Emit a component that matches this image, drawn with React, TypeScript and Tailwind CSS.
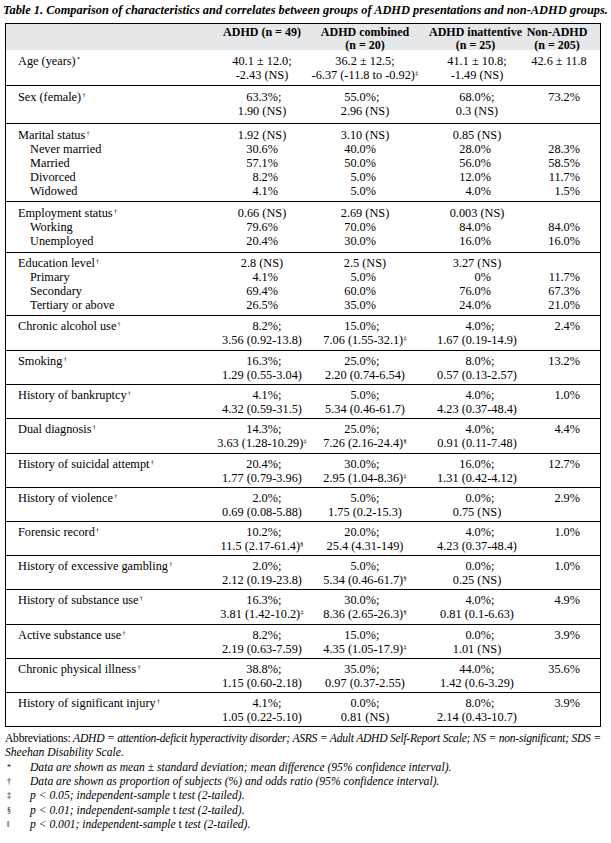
import React from "react";

type Kind = "c" | "p" | "a";
type Cell = [string, Kind] | null;

const SUPS = ["‡", "§", "*", "†", "‖"];

function Txt({ v }: { v: string }) {
  let main = v;
  let sup = "";
  const last = v.slice(-1);
  if (SUPS.includes(last)) {
    main = v.slice(0, -1);
    sup = last;
  }
  let semi = false;
  if (/%;$/.test(main)) {
    main = main.slice(0, -1);
    semi = true;
  }
  return (
    <span className="whitespace-nowrap">
      {main}
      {semi && <span className="inline-block w-0">;</span>}
      {sup && <span className="relative -top-[4px] text-[7px] leading-none">{sup}</span>}
    </span>
  );
}

const PR = ["pr-[32px]", "pr-[44px]", "pr-[43px]", "pr-[20px]"];

function ValueCell({ cell, col }: { cell: Cell; col: number }) {
  if (!cell) return <div />;
  const [v, k] = cell;
  if (k === "p") {
    return (
      <div className={`flex justify-end ${PR[col]}`}>
        <Txt v={v} />
      </div>
    );
  }
  if (k === "a") {
    return (
      <div className="flex justify-center pr-[16px]">
        <Txt v={v} />
      </div>
    );
  }
  return (
    <div className="flex justify-center">
      <Txt v={v} />
    </div>
  );
}

type Line = { label?: string; sup?: string; sub?: boolean; cells: Cell[] };

function LineRow({ line }: { line: Line }) {
  return (
    <div className="grid grid-cols-[208px_96px_110px_114px_66px] leading-[14px]">
      <div className={`${line.sub ? "pl-[24px]" : "pl-[12px]"} whitespace-nowrap`}>
        {line.label}
        {line.sup && <span className="relative -top-[4px] text-[7px] leading-none ml-[1px]">{line.sup}</span>}
      </div>
      {line.cells.map((c, i) => (
        <ValueCell key={i} cell={c} col={i} />
      ))}
    </div>
  );
}

function twoLine(label: string, a: string[], b: string[], c: string[], d: string): Line[] {
  return [
    { label, sup: "†", cells: [[a[0], "p"], [b[0], "p"], [c[0], "p"], [d, "p"]] },
    { cells: [[a[1], "c"], [b[1], "c"], [c[1], "c"], null] },
  ];
}

function catRows(label: string, stats: string[], subs: [string, string, string, string, string][]): Line[] {
  return [
    { label, sup: "†", cells: [[stats[0], "c"], [stats[1], "c"], [stats[2], "c"], null] },
    ...subs.map((s) => ({
      label: s[0],
      sub: true,
      cells: [[s[1], "p"], [s[2], "p"], [s[3], "p"], [s[4], "p"]] as Cell[],
    })),
  ];
}

const rows: { pad: string; lines: Line[] }[] = [
  {
    pad: "pt-[4px] pb-[3px]",
    lines: [
      { label: "Age (years)", sup: "*", cells: [["40.1 ± 12.0;", "c"], ["36.2 ± 12.5;", "c"], ["41.1 ± 10.8;", "c"], ["42.6 ± 11.8", "a"]] },
      { cells: [["-2.43 (NS)", "c"], ["-6.37 (-11.8 to -0.92)‡", "c"], ["-1.49 (NS)", "c"], null] },
    ],
  },
  { pad: "pt-[4px] pb-[5px]", lines: twoLine("Sex (female)", ["63.3%;", "1.90 (NS)"], ["55.0%;", "2.96 (NS)"], ["68.0%;", "0.3 (NS)"], "73.2%") },
  {
    pad: "pt-[4px] pb-[3px]",
    lines: catRows("Marital status", ["1.92 (NS)", "3.10 (NS)", "0.85 (NS)"], [
      ["Never married", "30.6%", "40.0%", "28.0%", "28.3%"],
      ["Married", "57.1%", "50.0%", "56.0%", "58.5%"],
      ["Divorced", "8.2%", "5.0%", "12.0%", "11.7%"],
      ["Widowed", "4.1%", "5.0%", "4.0%", "1.5%"],
    ]),
  },
  {
    pad: "pt-[4px] pb-[4px]",
    lines: catRows("Employment status", ["0.66 (NS)", "2.69 (NS)", "0.003 (NS)"], [
      ["Working", "79.6%", "70.0%", "84.0%", "84.0%"],
      ["Unemployed", "20.4%", "30.0%", "16.0%", "16.0%"],
    ]),
  },
  {
    pad: "pt-[3px] pb-[3px]",
    lines: catRows("Education level", ["2.8 (NS)", "2.5 (NS)", "3.27 (NS)"], [
      ["Primary", "4.1%", "5.0%", "0%", "11.7%"],
      ["Secondary", "69.4%", "60.0%", "76.0%", "67.3%"],
      ["Tertiary or above", "26.5%", "35.0%", "24.0%", "21.0%"],
    ]),
  },
  { pad: "pt-[3px] pb-[3px]", lines: twoLine("Chronic alcohol use", ["8.2%;", "3.56 (0.92-13.8)"], ["15.0%;", "7.06 (1.55-32.1)‡"], ["4.0%;", "1.67 (0.19-14.9)"], "2.4%") },
  { pad: "", lines: twoLine("Smoking", ["16.3%;", "1.29 (0.55-3.04)"], ["25.0%;", "2.20 (0.74-6.54)"], ["8.0%;", "0.57 (0.13-2.57)"], "13.2%") },
  { pad: "", lines: twoLine("History of bankruptcy", ["4.1%;", "4.32 (0.59-31.5)"], ["5.0%;", "5.34 (0.46-61.7)"], ["4.0%;", "4.23 (0.37-48.4)"], "1.0%") },
  { pad: "", lines: twoLine("Dual diagnosis", ["14.3%;", "3.63 (1.28-10.29)‡"], ["25.0%;", "7.26 (2.16-24.4)§"], ["4.0%;", "0.91 (0.11-7.48)"], "4.4%") },
  { pad: "", lines: twoLine("History of suicidal attempt", ["20.4%;", "1.77 (0.79-3.96)"], ["30.0%;", "2.95 (1.04-8.36)‡"], ["16.0%;", "1.31 (0.42-4.12)"], "12.7%") },
  { pad: "", lines: twoLine("History of violence", ["2.0%;", "0.69 (0.08-5.88)"], ["5.0%;", "1.75 (0.2-15.3)"], ["0.0%;", "0.75 (NS)"], "2.9%") },
  { pad: "", lines: twoLine("Forensic record", ["10.2%;", "11.5 (2.17-61.4)§"], ["20.0%;", "25.4 (4.31-149)"], ["4.0%;", "4.23 (0.37-48.4)"], "1.0%") },
  { pad: "", lines: twoLine("History of excessive gambling", ["2.0%;", "2.12 (0.19-23.8)"], ["5.0%;", "5.34 (0.46-61.7)§"], ["0.0%;", "0.25 (NS)"], "1.0%") },
  { pad: "", lines: twoLine("History of substance use", ["16.3%;", "3.81 (1.42-10.2)‡"], ["30.0%;", "8.36 (2.65-26.3)§"], ["4.0%;", "0.81 (0.1-6.63)"], "4.9%") },
  { pad: "", lines: twoLine("Active substance use", ["8.2%;", "2.19 (0.63-7.59)"], ["15.0%;", "4.35 (1.05-17.9)‡"], ["0.0%;", "1.01 (NS)"], "3.9%") },
  { pad: "", lines: twoLine("Chronic physical illness", ["38.8%;", "1.15 (0.60-2.18)"], ["35.0%;", "0.97 (0.37-2.55)"], ["44.0%;", "1.42 (0.6-3.29)"], "35.6%") },
  { pad: "", lines: twoLine("History of significant injury", ["4.1%;", "1.05 (0.22-5.10)"], ["0.0%;", "0.81 (NS)"], ["8.0%;", "2.14 (0.43-10.7)"], "3.9%") },
];

const notes: [string, React.ReactNode][] = [
  ["*", <>Data are shown as mean ± standard deviation; mean difference (95% confidence interval).</>],
  ["†", <>Data are shown as proportion of subjects (%) and odds ratio (95% confidence interval).</>],
  ["‡", <>p &lt; 0.05; independent-sample <span className="not-italic">t</span> test (2-tailed).</>],
  ["§", <>p &lt; 0.01; independent-sample <span className="not-italic">t</span> test (2-tailed).</>],
  ["‖", <>p &lt; 0.001; independent-sample <span className="not-italic">t</span> test (2-tailed).</>],
];

export default function App() {
  return (
    <div className="w-[611px] h-[843px] bg-white text-black font-['Liberation_Serif',serif] overflow-hidden">
      <div className="h-[23px] pt-[2px] pl-[3px] text-[12.4px] leading-[16px] font-bold italic whitespace-nowrap">
        Table 1. Comparison of characteristics and correlates between groups of ADHD presentations and non-ADHD groups.
      </div>
      <div className="ml-[5px] w-[596px] border border-black text-[12.3px]">
        <div className="bg-[#e6e7e8] pt-[2px] h-[26px] text-[12px] font-bold leading-[12.5px] grid grid-cols-[208px_96px_110px_114px_66px]">
          <div />
          <div className="flex flex-col items-center whitespace-nowrap">ADHD (n = 49)</div>
          <div className="flex flex-col items-center whitespace-nowrap">
            <span>ADHD combined</span>
            <span>(n = 20)</span>
          </div>
          <div className="flex flex-col items-center whitespace-nowrap pr-[3px]">
            <span>ADHD inattentive</span>
            <span>(n = 25)</span>
          </div>
          <div className="flex flex-col items-center whitespace-nowrap pr-[20px]">
            <span>Non-ADHD</span>
            <span>(n = 205)</span>
          </div>
        </div>
        {rows.map((r, i) => (
          <div
            key={i}
            className={`${r.pad || "pt-[3px] pb-[2.2px]"} ${i < rows.length - 1 ? "border-b border-black" : ""}`}
          >
            {r.lines.map((l, j) => (
              <LineRow key={j} line={l} />
            ))}
          </div>
        ))}
      </div>
      <div className="pl-[5px] pt-[5px] text-[11.6px] leading-[14.3px]">
        <div className="whitespace-nowrap tracking-[-0.25px]">
          Abbreviations: <span className="italic">ADHD = attention-deficit hyperactivity disorder; ASRS = Adult ADHD Self-Report Scale; NS = non-significant; SDS =</span>
        </div>
        <div className="italic whitespace-nowrap">Sheehan Disability Scale.</div>
        {notes.map(([s, t], i) => (
          <div key={i} className="flex whitespace-nowrap">
            <span className="w-[25px] pl-[2px] text-[8px]">{s}</span>
            <span className="italic">{t}</span>
          </div>
        ))}
      </div>
    </div>
  );
}
